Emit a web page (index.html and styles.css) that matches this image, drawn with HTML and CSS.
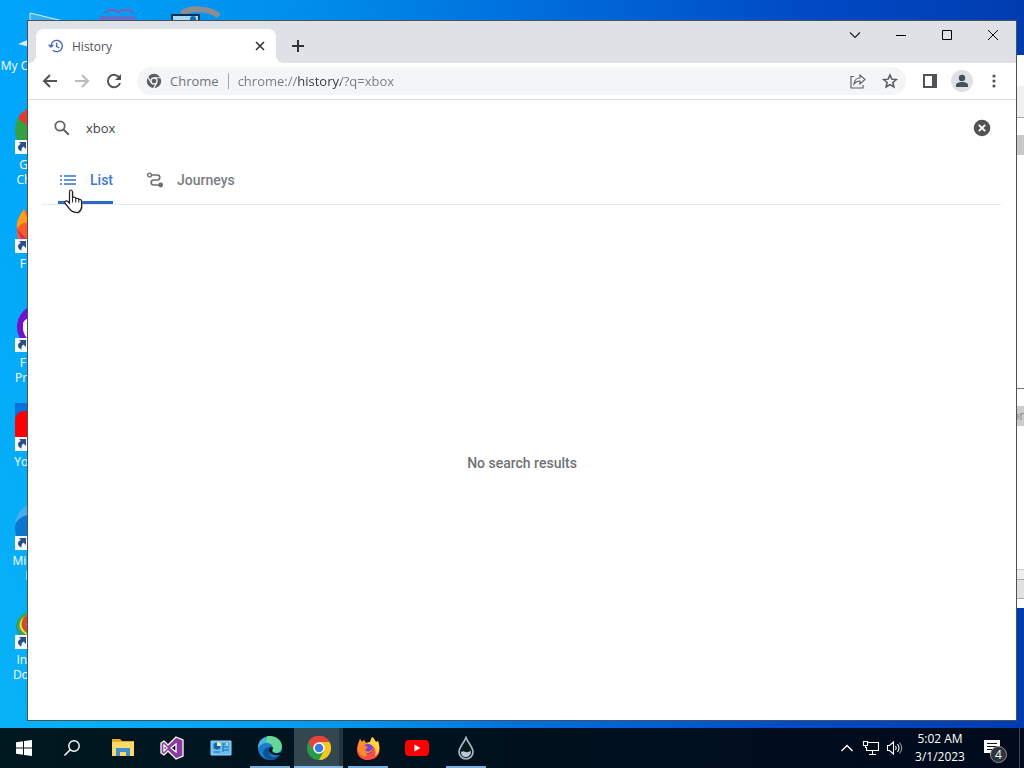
FILE: index.html
```html
<!DOCTYPE html>
<html lang="en">
<head>
<meta charset="utf-8">
<title>History</title>
<link rel="stylesheet" href="styles.css">
</head>
<body>
<div class="screen">
  <main class="desktop">
    <ul class="shortcuts">
      <li class="shortcut">
        <svg class="shortcut-icon" viewBox="0 0 48 48" aria-hidden="true"><path d="M15 6v18L48 14z" fill="#38adf0" stroke="#d7f2ff"/><path d="M3 37l12-5v8z" fill="#d9eefb"/></svg>
        <span>My Computer</span>
      </li>
      <li class="shortcut">
        <svg class="shortcut-icon" viewBox="0 0 48 48" aria-hidden="true"><circle cx="24" cy="24" r="24" fill="#34a042"/><path d="M24 30L3 12A24 24 0 0 1 45 12z" fill="#e33b2e"/><path d="M24 24L45 12A24 24 0 0 1 24 48z" fill="#fbc116"/><circle cx="24" cy="24" r="11" fill="#4285f4" stroke="#fff" stroke-width="2"/><use href="#arrow"/></svg>
        <span>Google<br>Chrome</span>
      </li>
      <li class="shortcut">
        <svg class="shortcut-icon" viewBox="0 0 48 48" aria-hidden="true"><path d="M9 4C12 10 20 6 28 5 42 8 47 17 47 27A22 22 0 0 1 2 26C1 18 6 11 9 4z" fill="#ff5b28"/><path d="M9 4C3 12 1 18 2 24Q7 16 14 18z" fill="#ff9d18"/><path d="M2 24C6 40 20 46 30 43L12 34z" fill="#d93050"/><use href="#arrow"/></svg>
        <span>Firefox</span>
      </li>
      <li class="shortcut">
        <svg class="shortcut-icon" viewBox="0 0 48 48" aria-hidden="true"><circle cx="25" cy="23" r="23" fill="#7511c9"/><path d="M8 19q2-5 10-6l7-3 8 5 16 5v8q-1 12-16 19Q9 38 8 25z" fill="#fff"/><use href="#arrow"/></svg>
        <span>Firefox<br>Private…</span>
      </li>
      <li class="shortcut">
        <svg class="shortcut-icon" viewBox="0 0 48 48" aria-hidden="true"><path d="M0 0h48v48H0z" fill="#0872dc"/><rect y="8" width="48" height="32" rx="9" fill="#f00"/><path d="M0 18h8v17H0z" fill="#f00"/><path d="M19 17l14 8-14 8z" fill="#fff"/><use href="#arrow"/></svg>
        <span>YouTube</span>
      </li>
      <li class="shortcut">
        <svg class="shortcut-icon" viewBox="0 0 48 48" aria-hidden="true"><circle cx="24" cy="24" r="24" fill="#45aeed"/><path d="M0 24C2 14 18 8 30 17v29C14 52-1 40 0 24z" fill="#0877d0"/><use href="#arrow"/></svg>
        <span>Microsoft<br>Edge</span>
      </li>
      <li class="shortcut">
        <svg class="shortcut-icon" viewBox="0 0 48 48" aria-hidden="true"><ellipse cx="24" cy="26" rx="23" ry="16" fill="#3f7fc8"/><ellipse cx="24" cy="24" rx="21" ry="14" fill="#eee532" stroke="#3aa74b" stroke-width="3"/><ellipse cx="24" cy="23" rx="15" ry="10" fill="#65bcec" stroke="#d5492d" stroke-width="5"/><use href="#arrow"/></svg>
        <span>Internet<br>Downlo…</span>
      </li>
    </ul>

    <svg class="peeking-icons" width="124" height="20" viewBox="0 0 124 20" aria-hidden="true">
      <path d="M9 13l4-3h6l3 3 4-3h8l3 4" fill="none" stroke="#7d5fb4" stroke-width="2"/><path d="M3 18h36" stroke="#7b61ba" stroke-width="3"/>
      <path d="M86 14c5-6 26-7 37 2" fill="none" stroke="#8d8c90" stroke-width="6"/>
      <path d="M76 22v-7h27v7z" fill="#a5dbf6" stroke="#0a3152" stroke-width="2"/><circle cx="97" cy="19" r="3" fill="#176dac"/>
    </svg>

    <div class="back-window" aria-hidden="true">
      <div class="back-bar"></div><div class="back-button"></div><div class="back-space"></div>
      <div class="back-list">or</div><div class="back-space-low"></div><div class="back-status"></div>
    </div>

    <section class="window" aria-label="History">
      <header class="titlebar">
        <div class="browser-tab">
          <svg class="tab-icon" width="16" height="16" viewBox="0 0 24 24" aria-hidden="true"><path d="M4.500 12a8.500 8.500 0 1 1 3 6.500M1 10l3.500 3.500L8 10M13 7v6l4 2" fill="none" stroke="#4a67bd" stroke-width="2"/></svg>
          <span class="tab-title">History</span>
          <button class="tab-close" aria-label="Close tab"><svg width="10" height="10" viewBox="0 0 10 10"><path d="M1 1l8 8M9 1L1 9" stroke="#303336" stroke-width="1.600"/></svg></button>
        </div>
        <button class="new-tab" aria-label="New tab"><svg width="14" height="14" viewBox="0 0 14 14"><path d="M7 1v12M1 7h12" stroke="#303336" stroke-width="2"/></svg></button>
        <div class="caption-buttons">
          <button aria-label="Search tabs"><svg width="12" height="12" viewBox="0 0 12 12"><path d="M1 3.500l5 5 5-5" fill="none" stroke="#222" stroke-width="1.200"/></svg></button>
          <button aria-label="Minimize"><svg width="12" height="12" viewBox="0 0 12 12"><path d="M1 6.500h10" stroke="#000"/></svg></button>
          <button aria-label="Maximize"><svg width="12" height="12" viewBox="0 0 12 12"><path d="M1.500 1.500h9v9h-9z" fill="none" stroke="#000"/></svg></button>
          <button aria-label="Close"><svg width="12" height="12" viewBox="0 0 12 12"><path d="M1 1l10 10M11 1L1 11" stroke="#000"/></svg></button>
        </div>
      </header>

      <div class="toolbar">
        <button class="tool" aria-label="Back"><svg width="20" height="20" viewBox="0 0 20 20"><path d="M17 10H4M10 4l-6 6 6 6" fill="none" stroke="#505458" stroke-width="2"/></svg></button>
        <button class="tool" aria-label="Forward"><svg width="20" height="20" viewBox="0 0 20 20"><path d="M3 10h13M10 4l6 6-6 6" fill="none" stroke="#b9bbbd" stroke-width="2"/></svg></button>
        <button class="tool" aria-label="Reload"><svg width="20" height="20" viewBox="0 0 20 20"><path d="M15.500 7A6.200 6.200 0 1 0 16 12" fill="none" stroke="#505458" stroke-width="2"/><path d="M17 3v6h-6z" fill="#505458"/></svg></button>
        <div class="omnibox">
          <svg class="site-icon" width="16" height="16" viewBox="0 0 16 16" aria-hidden="true"><circle cx="8" cy="8" r="7.200" fill="#5b5f63"/><circle cx="8" cy="8" r="3" fill="#5b5f63" stroke="#f3f4f5" stroke-width="1.300"/><path d="M8 4.700h6.800M5.200 9.600L1.700 3.900M10.900 9.600l-3.500 6" stroke="#f3f4f5" stroke-width="1.100"/></svg>
          <label class="site-name" for="address">Chrome</label>
          <input class="address" id="address" type="text" value="chrome://history/?q=xbox" spellcheck="false">
          <button class="tool" aria-label="Share"><svg width="18" height="18" viewBox="0 0 18 18"><path d="M5 4.500H2V16h12v-3M5 12c.5-4 2.500-6 6-6V3l5 4.500-5 4.500V9c-3 0-4.500 1-6 3z" fill="none" stroke="#5f6368" stroke-width="1.200"/></svg></button>
          <button class="tool" aria-label="Bookmark this tab"><svg width="18" height="18" viewBox="0 0 24 24"><path d="M12 4l2.400 5.500 6 .5-4.600 4 1.400 5.800L12 16.700l-5.200 3.100L8.200 14l-4.600-4 6-.5z" fill="none" stroke="#54585c" stroke-width="2"/></svg></button>
        </div>
        <button class="tool" aria-label="Side panel"><svg width="14" height="14" viewBox="0 0 14 14"><path d="M0 0h14v14H0zM2 2v10h7V2z" fill="#505256" fill-rule="evenodd"/></svg></button>
        <button class="tool" aria-label="Profile"><svg width="22" height="22" viewBox="0 0 22 22"><circle cx="11" cy="11" r="11" fill="#dfe1e7"/><circle cx="11" cy="8" r="3.200" fill="#4a4e59"/><path d="M5 17v-2c0-4 12-4 12 0v2z" fill="#4a4e59"/></svg></button>
        <button class="tool" aria-label="Menu"><svg width="4" height="14" viewBox="0 0 4 14"><g fill="#505458"><circle cx="2" cy="2" r="1.600"/><circle cx="2" cy="7" r="1.600"/><circle cx="2" cy="12" r="1.600"/></g></svg></button>
      </div>

      <div class="page">
        <div class="search">
          <svg width="20" height="20" viewBox="0 0 20 20" aria-hidden="true"><circle cx="8" cy="8" r="4.700" fill="none" stroke="#5f6368" stroke-width="1.800"/><path d="M11.500 11.500l5.300 5.300" stroke="#5f6368" stroke-width="2"/></svg>
          <input class="search-input" type="text" value="xbox" aria-label="Search history">
          <button class="clear" aria-label="Clear search"><svg width="18" height="18" viewBox="0 0 18 18"><circle cx="9" cy="9" r="8.300" fill="#515355"/><path d="M5.800 5.800l6.400 6.400M12.200 5.800l-6.400 6.400" stroke="#fff" stroke-width="1.900"/></svg></button>
        </div>
        <nav class="page-tabs">
          <a class="page-tab selected" href="#list"><svg width="20" height="20" viewBox="0 0 20 20" aria-hidden="true"><path d="M6 6h12M6 10h12M6 14h12M2 6h2M2 10h2M2 14h2" stroke="#3573cb" stroke-width="1.700"/></svg>List</a>
          <a class="page-tab" href="#journeys"><svg width="20" height="20" viewBox="0 0 20 20" aria-hidden="true"><circle cx="4.500" cy="5" r="1.900" fill="none" stroke="#6b6e72" stroke-width="1.400"/><path d="M6.500 5h5.800c3.300 0 3.300 5 0 5H8.800c-3.500 0-3.500 5 0 5H15" fill="none" stroke="#6b6e72" stroke-width="1.600"/><circle cx="15.700" cy="15" r="2.400" fill="#6b6e72"/></svg>Journeys</a>
        </nav>
        <p class="empty">No search results</p>
      </div>
    </section>

    <svg class="pointer" width="22" height="27" viewBox="0 0 22 27" aria-hidden="true">
      <path d="M7.500 22L3 16.500Q1 14 2.500 13.200q1.500-.7 4 2V3.500q0-2 1.500-2T9.800 3.500V9q2.700-1 3.300 1 2.400-.7 3 1 2.700-.3 2.700 2v5q0 4-3.300 6.500Q10 25.500 7.500 22z" fill="#999" opacity=".5"/>
      <path d="M6.500 21L2 15.500Q-.2 13 1.500 12q1.700-.7 4 2V3q0-2 1.400-2T8.500 3v5.500q2.800-1 3.300 1 2.500-.8 3 1 2.800-.3 2.800 2v5q0 3.500-3.200 6Q9 23.500 6.500 21z" fill="#fff" stroke="#202124" stroke-width="1.200"/><path d="M8.500 8.500v5M11.800 9.500v4M14.800 10.500v3" stroke="#202124"/>
    </svg>
  </main>

  <footer class="taskbar">
    <button class="task start" aria-label="Start"><svg width="16" height="16" viewBox="0 0 16 16"><path d="M0 2.300L7 1.200v6.300H0zM8 1l8-1v7.500H8zM0 8.500h7v6.300l-7-1zM8 8.500h8V16l-8-1z" fill="#fff"/></svg></button>
    <button class="task start" aria-label="Search"><svg width="18" height="18" viewBox="0 0 18 18"><circle cx="11" cy="7" r="5.200" fill="none" stroke="#fff" stroke-width="1.400"/><path d="M7.200 10.800L1.500 16.500" stroke="#fff" stroke-width="1.500"/></svg></button>
    <div class="apps">
      <button class="task" aria-label="File Explorer"><svg width="24" height="24" viewBox="0 0 24 24"><path d="M1 3h8l2 2h12v15H1z" fill="#e9a927"/><path d="M1 6h22v14H1z" fill="#ffda6a"/><path d="M5 12h14v8h-4v-4H9v4H5z" fill="#3e91cc"/></svg></button>
      <button class="task" aria-label="Visual Studio"><svg width="26" height="26" viewBox="0 0 26 26"><path d="M17 2l7 3v16l-7 3-8-8-4 4-3-2V8l3-2 4 4zM17 9l-5 4 5 4zM5 10v6l3-3z" fill="#8a3b9d" fill-rule="evenodd" stroke="#fff" stroke-width="1.300"/></svg></button>
      <button class="task" aria-label="Control Panel"><svg width="22" height="22" viewBox="0 0 22 22"><path d="M1 4h20v14H1z" fill="#69bff0" stroke="#90d7ff"/><circle cx="7" cy="9" r="3.500" fill="#1763a8"/><path d="M7 9V5a4 4 0 0 1 4 4z" fill="#fff3a2"/><path d="M13 7h6M13 10h6M13 13h6M13 6v9M4 15h6" stroke="#216ca5"/><circle cx="17" cy="7" r="1" fill="#fff"/></svg></button>
      <button class="task running" aria-label="Microsoft Edge"><svg width="24" height="24" viewBox="0 0 24 24"><circle cx="12" cy="12" r="12" fill="#1a7dcc"/><path d="M0 12C0 2 9-1 16 1c8 3 10 12 5 15-3 2-7 1-7-1 0-1 2-2 1-4-2-6-11-5-15 1z" fill="#42b5d8"/><path d="M9 0c13-1 17 9 14 14-2 4-8 3-9 1 0-1 2-2 1-4-1-3-4-4-7-5z" fill="#67d795"/><path d="M14 11c-3 1-4 8 0 10 3 1 6-1 8-3-3 6-9 7-13 5-7-4-4-13 5-12z" fill="#124f99"/><path d="M14 11c2 2-1 3 1 5 3 2 6 1 9 0v2c-7 3-13 0-13-4 0-2 1-3 3-3z" fill="#001621"/></svg></button>
      <button class="task running active" aria-label="Google Chrome"><svg width="24" height="24" viewBox="0 0 24 24"><circle cx="12" cy="12" r="12" fill="#279d4b"/><path d="M12 12L1.500 6A12 12 0 0 1 22.500 6z" fill="#e54538"/><path d="M12 6h10.400A12 12 0 0 1 12 24l5-9z" fill="#fbc521"/><path d="M1.500 6L7 15l5-9h10.500A12 12 0 0 0 1.500 6z" fill="#e54538"/><circle cx="12" cy="12" r="5" fill="#3778df" stroke="#fff" stroke-width="1.500"/></svg></button>
      <button class="task running" aria-label="Firefox"><svg width="24" height="24" viewBox="0 0 24 24"><path d="M4 3l2 3 2-2 2 3 4-1 2-5c3 2 3 4 4 5l2-1c5 13-2 19-10 19C2 24-2 15 3 6z" fill="#fc4c43"/><path d="M10 7l4-1 2-5c3 2 3 4 4 5l2-1c3 9 0 13-3 15 2-7-1-11-9-13z" fill="#ffd83f"/><path d="M4 3l2 3 2-2 2 3 3 1-5 3c-1 2 0 5 4 6l-3 4C2 20 0 11 4 3z" fill="#ff9127"/><circle cx="12" cy="13" r="5" fill="#7545d9"/><path d="M3 11c4-2 6-1 9 0l-3 3c3 3 6 1 8-2 0 6-11 8-14-1z" fill="#ff862c"/></svg></button>
      <button class="task" aria-label="YouTube"><svg width="24" height="18" viewBox="0 0 24 18"><rect y="1" width="24" height="16" rx="4" fill="#f00"/><path d="M9.500 5.500l6 3.500-6 3.500z" fill="#fff"/></svg></button>
      <button class="task running" aria-label="Rainmeter"><svg width="18" height="24" viewBox="0 0 18 24"><path d="M9 1.500C7 7 2 11 2 16a7 7 0 0 0 14 0c0-5-5-9-7-14.500z" fill="#071820" stroke="#a8b5c0" stroke-width="1.700"/><path d="M4 16c3-2 4 1 7 0l3-1c0 8-10 8-10 1z" fill="#b8c9d8"/></svg></button>
    </div>
    <div class="tray">
      <button class="tray-button" aria-label="Show hidden icons"><svg width="14" height="14" viewBox="0 0 14 14"><path d="M1.500 10L7 4.500l5.500 5.500" fill="none" stroke="#fff" stroke-width="1.400"/></svg></button>
      <button class="tray-button" aria-label="Network"><svg width="18" height="16" viewBox="0 0 18 16"><path d="M6 2.500h10.500v8H4.500V7M10.500 11v3M7 14.500h7M1.500 1.500h4v4h-4zM3.500 6v2" fill="none" stroke="#fff" stroke-width="1.100"/></svg></button>
      <button class="tray-button" aria-label="Volume"><svg width="18" height="16" viewBox="0 0 18 16"><path d="M1.500 5.500h2L7.500 2v12l-4-3.500h-2zM9.500 6q1.500 2 0 4M11.500 4q3 4 0 8" fill="none" stroke="#fff" stroke-width="1.100"/><path d="M13.500 2.500q4.500 5.500 0 11" fill="none" stroke="#8b94a0" stroke-width="1.100"/></svg></button>
      <button class="clock"><span>5:02 AM</span><span>3/1/2023</span></button>
      <button class="notifications" aria-label="Notifications"><svg width="18" height="18" viewBox="0 0 18 18" aria-hidden="true"><path d="M1 1h16v13h-7l-3 3v-3H1z" fill="#fff"/><path d="M4 4.500h10M4 7.500h10M4 10.500h7" stroke="#071426"/></svg><span class="badge">4</span></button>
      <button class="show-desktop" aria-label="Show desktop"></button>
    </div>
  </footer>
</div>
<svg class="symbols" aria-hidden="true"><symbol id="arrow" viewBox="0 0 48 48"><path d="M0 34h14v14H0z" fill="#f4f8fc"/><path d="M4 36h7v7l-2.500-2.500Q6 42 6.500 45.500 3 44 3 41.500 3 39 6 38z" fill="#284f87"/></symbol></svg>
</body>
</html>
```
FILE: styles.css
```css
* { box-sizing: border-box; }
body { margin: 0; font-family: "Open Sans", "Noto Sans", sans-serif; font-size: 12px; }
button { display: flex; align-items: center; justify-content: center; margin: 0; padding: 0; border: 0; background: none; color: inherit; font: inherit; }
input { min-width: 0; padding: 0; border: 0; outline: 0; background: none; font: inherit; }
svg { display: block; flex: none; }
.symbols { position: absolute; width: 0; height: 0; }

.screen { display: grid; grid-template-rows: 1fr 40px; height: 100vh; overflow: hidden; }
.desktop { position: relative; min-height: 0; overflow: hidden; background: linear-gradient(90deg, #00a6fc 0%, #008eea 30%, #006bda 54%, #004bc5 78%, #003cb0 100%); }
.desktop::before { content: ""; position: absolute; inset: 0; background: linear-gradient(90deg, #08b2f6, #08b2f600 50%); mask-image: linear-gradient(transparent, #000); }

.shortcuts { position: relative; width: 78px; margin: 0; padding: 7px 0 0; list-style: none; color: #fff; }
.shortcut { display: flex; flex-direction: column; align-items: center; gap: 3px; height: 99px; line-height: 15px; text-align: center; white-space: nowrap; }
.shortcut-icon { width: 48px; height: 48px; }
.peeking-icons { position: absolute; left: 96px; top: 0; }

.back-window { position: absolute; right: 0; top: 55px; display: flex; flex-direction: column; width: 12px; height: 553px; background: #fff; color: #888; }
.back-bar { height: 63px; border-top: 31px solid #fff; border-bottom: 1px solid #aaa; background: #f0f0f0; }
.back-button { height: 20px; margin-top: 17px; background: #c8c8c8; }
.back-space { height: 234px; border-bottom: 1px solid #777; }
.back-list { height: 20px; margin-top: 17px; background: #ccc; line-height: 20px; font-size: 12px; }
.back-space-low { height: 153px; border-bottom: 9px solid #eee; box-shadow: inset 0 -1px #ccc; }
.back-status { height: 20px; border: solid #aaa; border-width: 1px 0; background: #e1e1e1; }

.window { position: absolute; inset: 20px 7px 7px 27px; display: flex; flex-direction: column; border: 1px solid #46535f; background: #fff; }
.titlebar { display: flex; flex: none; height: 42px; padding: 8px 0 0 8px; background: #dee1e6; }
.browser-tab { position: relative; display: flex; align-items: center; width: 240px; padding: 0 9px 0 12px; border-radius: 8px 8px 0 0; background: #fff; }
.browser-tab::before, .browser-tab::after { content: ""; position: absolute; bottom: 0; width: 8px; height: 8px; }
.browser-tab::before { right: 100%; background: radial-gradient(circle at 0 0, transparent 8px, #fff 8px); }
.browser-tab::after { left: 100%; background: radial-gradient(circle at 100% 0, transparent 8px, #fff 8px); }
.tab-title { flex: 1; margin-left: 8px; color: #505357; }
.tab-close { width: 14px; height: 14px; }
.new-tab { width: 28px; height: 34px; margin-left: 8px; }
.caption-buttons { display: flex; height: 28px; margin: -8px 0 0 auto; }
.caption-buttons button { width: 46px; }

.toolbar { display: flex; flex: none; align-items: center; height: 37px; padding: 0 6px; border-bottom: 1px solid #d8dadd; background: #fff; }
.tool { flex: none; width: 32px; height: 28px; }
.omnibox { display: flex; flex: 1; align-items: center; min-width: 0; height: 28px; margin: 0 8px 0 7px; padding: 0 0 0 9px; border-radius: 14px; background: #f4f5f6; font-size: 13px; }
.site-name { margin-left: 8px; padding-right: 9px; border-right: 1px solid #a4a7ab; color: #707478; line-height: 16px; }
.address { flex: 1; height: 24px; margin-left: 9px; background: linear-gradient(90deg, #75797d 60px, #35383c 60px, #35383c 103px, #75797d 103px); background-clip: text; color: transparent; }

.page { display: flex; flex: 1; flex-direction: column; min-height: 0; font-family: Roboto, sans-serif; }
.search { display: flex; align-items: center; height: 56px; padding: 0 25px 0 24px; }
.search-input { flex: 1; height: 24px; margin-left: 14px; color: #404346; font-family: "Open Sans", "Noto Sans", sans-serif; font-size: 13px; }
.clear { width: 18px; height: 18px; }
.page-tabs { display: flex; gap: 32px; height: 49px; margin: 0 15px 0 14px; padding-left: 16px; border-bottom: 1px solid #e9eaeb; }
.page-tab { display: flex; align-items: center; gap: 12px; padding-top: 2px; border-bottom: 3px solid transparent; color: #7b7e81; font-size: 14px; font-weight: 500; text-decoration: none; }
.page-tab.selected { border-color: #2c69c4; color: #3f79cc; }
.empty { display: flex; flex: 1; align-items: center; justify-content: center; margin: 0; color: #707275; font-size: 14px; font-weight: 500; }
.pointer { position: absolute; left: 64px; top: 189px; }

.taskbar { display: flex; background: linear-gradient(90deg, #001820, #000a1c); color: #fff; }
.task { width: 49px; height: 40px; }
.task.start { width: 48px; }
.apps { display: flex; margin-left: 2px; }
.running { background: linear-gradient(#77aee0, #77aee0) center bottom / 40px 2px no-repeat; }
.running.active { background: linear-gradient(#85b9e8, #85b9e8) center bottom / 100% 2px no-repeat, linear-gradient(90deg, #33474f 45px, #21353e 45px); }
.tray { display: flex; margin-left: auto; }
.tray-button { width: 24px; }
.clock { flex-direction: column; width: 66px; line-height: 18px; }
.notifications { position: relative; width: 38px; margin-right: 8px; }
.badge { position: absolute; left: 17px; top: 18px; width: 17px; height: 17px; border: 1px solid #8b8f94; border-radius: 50%; background: #30353b; line-height: 15px; text-align: center; }
.show-desktop { width: 5px; border-left: 1px solid #3b465a; }
```
